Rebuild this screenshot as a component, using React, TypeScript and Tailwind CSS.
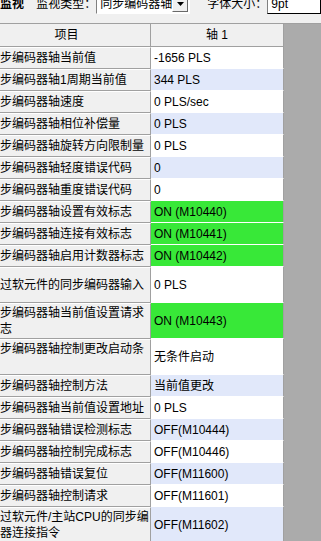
import React from "react";

type Row = { l: string[]; v: string; g?: boolean; tall?: boolean };

const rows: Row[] = [
  { l: ["同步编码器轴当前值"], v: "-1656 PLS" },
  { l: ["同步编码器轴1周期当前值"], v: "344 PLS" },
  { l: ["同步编码器轴速度"], v: "0 PLS/sec" },
  { l: ["同步编码器轴相位补偿量"], v: "0 PLS" },
  { l: ["同步编码器轴旋转方向限制量"], v: "0 PLS" },
  { l: ["同步编码器轴轻度错误代码"], v: "0" },
  { l: ["同步编码器轴重度错误代码"], v: "0" },
  { l: ["同步编码器轴设置有效标志"], v: "ON (M10440)", g: true },
  { l: ["同步编码器轴连接有效标志"], v: "ON (M10441)", g: true },
  { l: ["同步编码器轴启用计数器标志"], v: "ON (M10442)", g: true },
  { l: ["通过软元件的同步编码器输入"], v: "0 PLS", tall: true },
  { l: ["同步编码器轴当前值设置请求", "标志"], v: "ON (M10443)", g: true, tall: true },
  { l: ["同步编码器轴控制更改启动条", "件"], v: "无条件启动", tall: true },
  { l: ["同步编码器轴控制方法"], v: "当前值更改" },
  { l: ["同步编码器轴当前值设置地址"], v: "0 PLS" },
  { l: ["同步编码器轴错误检测标志"], v: "OFF(M10444)" },
  { l: ["同步编码器轴控制完成标志"], v: "OFF(M10446)" },
  { l: ["同步编码器轴错误复位"], v: "OFF(M11600)" },
  { l: ["同步编码器轴控制请求"], v: "OFF(M11601)" },
  { l: ["通过软元件/主站CPU的同步编", "码器连接指令"], v: "OFF(M11602)", tall: true },
];

export default function App() {
  return (
    <div
      className="w-[321px] h-[541px] overflow-hidden bg-[#f0f0f0] text-[12px] text-black"
      style={{ fontFamily: '"Liberation Sans", "Noto Sans CJK SC", sans-serif' }}
    >
      {/* toolbar */}
      <div className="h-[24px] border-b border-[#a0a0a0] overflow-hidden">
        <div className="flex items-center h-[22px] mt-[-7px] whitespace-nowrap">
          <span className="font-bold w-[41px]">监视</span>
          <span className="w-[65px]">监视类型：</span>
          <div className="flex items-stretch h-[20px] w-[100px] bg-white border border-t-[#808080] border-l-[#808080] border-r-white border-b-white">
            <span className="flex-1 pl-[3px] leading-[18px]">同步编码器轴</span>
            <div className="w-[16px] bg-[#f0f0f0] border border-t-white border-l-white border-r-[#696969] border-b-[#696969] flex items-center justify-center mb-[1px] mr-[1px]">
              <svg width="7" height="4" viewBox="0 0 7 4">
                <path d="M0 0h7L3.5 4z" fill="#000" />
              </svg>
            </div>
          </div>
          <span className="ml-[17px] w-[64px]">字体大小：</span>
          <div className="h-[20px] w-[60px] bg-white border border-t-[#808080] border-l-[#808080] pl-[3px] leading-[18px]">
            9pt
          </div>
        </div>
      </div>

      {/* grid */}
      <div className="flex">
        <div className="flex flex-col ml-[-17px]">
          {/* header */}
          <div className="flex h-[23px] border-b border-[#a0a0a0]">
            <div className="w-[168px] border-r border-[#a0a0a0] flex items-center justify-center">
              项目
            </div>
            <div className="w-[133px] border-r border-[#a0a0a0] flex items-center justify-center">
              轴 1
            </div>
          </div>
          {rows.map((r, i) => {
            const h = r.tall ? "h-[36px]" : "h-[22px]";
            const bg = r.g ? "bg-[#38e838]" : i % 2 === 1 ? "bg-[#e1e8fa]" : "bg-white";
            return (
              <div key={i} className={`flex ${h}`}>
                <div className="w-[168px] border-r border-[#a0a0a0] bg-[#f0f0f0] border-t border-t-white border-b border-b-[#a0a0a0] pl-[5px] flex flex-col justify-center overflow-hidden whitespace-nowrap leading-[16px]">
                  {r.l.map((t, j) => (
                    <div key={j}>{t}</div>
                  ))}
                </div>
                <div
                  className={`w-[133px] border-r border-[#a0a0a0] border-b border-b-white ${bg} pl-[3px] flex items-center whitespace-nowrap`}
                >
                  {r.v}
                </div>
              </div>
            );
          })}
        </div>
        <div className="flex-1 bg-[#ababab]" />
      </div>
    </div>
  );
}
